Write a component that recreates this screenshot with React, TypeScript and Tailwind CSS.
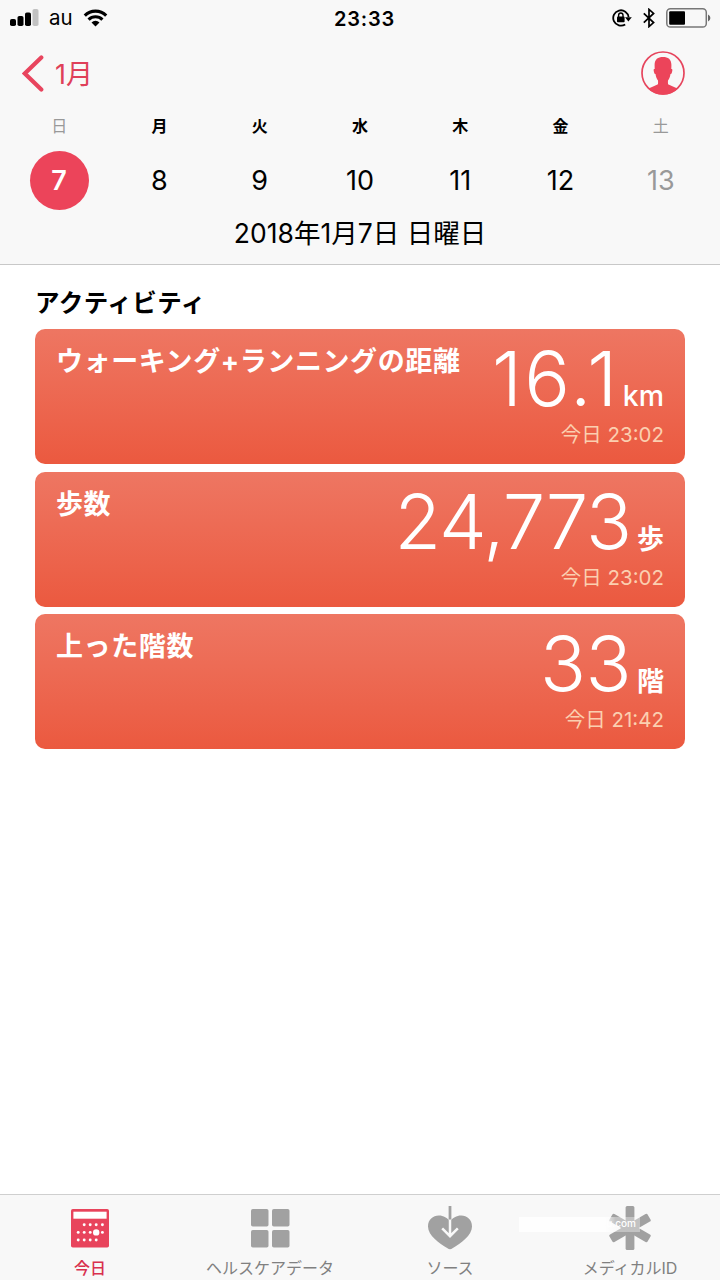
import type { ReactNode } from 'react';

const days = [
  { label: '日', date: 7, weekend: true, selected: true },
  { label: '月', date: 8 },
  { label: '火', date: 9 },
  { label: '水', date: 10 },
  { label: '木', date: 11 },
  { label: '金', date: 12 },
  { label: '土', date: 13, weekend: true },
];

const activities = [
  {
    title: 'ウォーキング+ランニングの距離',
    value: '16.1',
    unit: 'km',
    time: '今日 23:02',
    valueClass: 'tracking-[2.5px]',
    unitClass: 'ml-[3px] text-[28.5px] font-medium',
  },
  {
    title: '歩数',
    value: '24,773',
    unit: '歩',
    time: '今日 23:02',
    valueClass: 'tracking-[-1px]',
    unitClass: 'ml-[6px] text-[27px] font-bold',
  },
  {
    title: '上った階数',
    value: '33',
    unit: '階',
    time: '今日 21:42',
    valueClass: 'tracking-[-0.5px]',
    unitClass: 'ml-[6px] text-[27px] font-bold',
  },
];

function StatusBar() {
  return (
    <div className="flex h-9 items-center justify-between pl-[10px] pr-[9px]">
      <div className="flex w-[204px] items-center">
        <svg width="29" height="18" viewBox="0 0 29 18">
          <rect x="0" y="10" width="6" height="7" rx="1.8" />
          <rect x="7.5" y="7" width="6" height="10" rx="1.8" />
          <rect x="15" y="3.5" width="6" height="13.5" rx="1.8" />
          <rect x="22.5" y="0" width="6" height="17" rx="1.8" fill="#c2c2c2" />
        </svg>
        <span className="ml-[10px] pt-px text-[20.5px] leading-none">au</span>
        <svg className="ml-[10px]" width="25" height="18" viewBox="0 0 26 19" fill="none" stroke="#000" strokeWidth="3.3">
          <path d="M1.7 6.9a16 16 0 0 1 22.6 0" />
          <path d="M5.7 11.2a10.4 10.4 0 0 1 14.6 0" />
          <path d="M13 18.4l-4.2-4.2a6 6 0 0 1 8.4 0z" fill="#000" stroke="none" />
        </svg>
      </div>
      <span className="pt-px text-[20px] font-semibold leading-none tracking-[0.8px]">23:33</span>
      <div className="flex w-[196px] items-center justify-end">
        <svg width="20" height="18" viewBox="0 0 20 18" fill="none" stroke="#000" strokeWidth="1.8">
          <path d="M13.2 15.4A7.7 7.7 0 1 1 16.6 8.2" />
          <path d="M13 8.2h6.8l-3.4 4.2z" fill="#000" stroke="none" />
          <rect x="5" y="7.6" width="7.6" height="5.6" rx="0.8" fill="#000" stroke="none" />
          <path d="M6.6 8V6.2a2.2 2.2 0 0 1 4.400 0V8" strokeWidth="1.4" />
        </svg>
        <svg className="ml-[11px]" width="12" height="20" viewBox="0 0 12 20" fill="none" stroke="#000" strokeWidth="1.7">
          <path d="M0.8 5.4l9.800 9.200L6 18.600V1.400l4.600 4L0.800 14.600" />
        </svg>
        <svg className="ml-[11px]" width="45" height="20" viewBox="0 0 45 20">
          <rect x="0.8" y="0.8" width="39.5" height="18.2" rx="3.6" fill="none" stroke="#777" strokeWidth="1.5" />
          <rect x="3.2" y="3.3" width="15.8" height="13.4" rx="1" />
          <path d="M42 6.5q2.400 1 2.400 3.500T42 13.500z" fill="#666" />
        </svg>
      </div>
    </div>
  );
}

function ProfileIcon() {
  return (
    <svg width="44" height="44" viewBox="0 0 44 44">
      <circle cx="22" cy="22" r="21" fill="none" stroke="#e6455d" strokeWidth="1.7" />
      <path
        fill="#ec445a"
        d="M22 6c5.200 0 8.600 2.400 8.400 8.600l-.1 3.400c1.300-.2 1.200 1.200.8 2.700-.4 1.400-.7 2.400-1.600 2.400-.4 2.900-1.300 5-2.500 6.500-.2 2.600 0 4.500.8 5.400 1.300 1.300 4.800 1.800 8.600 3A21 21 0 0 1 7.600 38c3.800-1.200 7.300-1.700 8.600-3 .8-.9 1-2.800.8-5.400-1.200-1.500-2.100-3.600-2.500-6.500-.9 0-1.200-1-1.600-2.400-.4-1.500-.5-2.900.8-2.700l-.1-3.400C13.400 8.400 16.800 6 22 6z"
      />
      <path fill="#ec445a" d="M7.600 37.500A21 21 0 0 0 36.400 37.500L27.500 33.500h-11z" />
    </svg>
  );
}

function CalendarIcon() {
  const dots = [
    [13.2, 15.8], [19.2, 15.8], [25.2, 15.8], [31.4, 15.8],
    [7.2, 23.4], [13.2, 23.4], [19.2, 23.4], [31.4, 23.4],
    [7.2, 31], [13.2, 31], [19.2, 31], [25.2, 31],
  ];
  return (
    <svg width="38" height="39" viewBox="0 0 38 39" fill="#fff">
      <rect width="38" height="38.5" rx="1.8" fill="#e8445c" />
      <rect x="2.4" y="2.7" width="33.2" height="7" />
      {dots.map(([x, y]) => (
        <circle key={`${x}-${y}`} cx={x} cy={y} r="1.45" />
      ))}
      <circle cx="25.2" cy="23.4" r="3.2" />
    </svg>
  );
}

function GridIcon() {
  return (
    <svg width="39" height="39" viewBox="0 0 39 39" fill="#a1a1a1">
      <rect width="17.5" height="17.5" rx="1.8" />
      <rect x="21" width="17.5" height="17.5" rx="1.8" />
      <rect y="21" width="17.5" height="17.5" rx="1.8" />
      <rect x="21" y="21" width="17.5" height="17.5" rx="1.8" />
    </svg>
  );
}

function HeartIcon() {
  return (
    <svg width="44" height="44" viewBox="0 0 44 44" fill="none">
      <path
        fill="#a1a1a1"
        d="M22 43.200c-1 0-1.600-.3-2.500-.9C11 37 0 29.500 0 20.500 0 13.700 5 9.600 10.800 9.600c4.700 0 8.700 2.400 11.200 6 2.500-3.600 6.500-6 11.200-6C39 9.600 44 13.700 44 20.500c0 9-11 16.500-19.500 21.800-.9.600-1.500.9-2.500.9z"
      />
      <path d="M22 0v14" stroke="#a1a1a1" strokeWidth="2.8" />
      <path d="M22 13.500V30M14.200 22.300l7.800 7.900 7.800-7.900" stroke="#f8f8f8" strokeWidth="2.5" />
    </svg>
  );
}

function MedicalIcon() {
  return (
    <svg width="42" height="44" viewBox="0 0 42 44" fill="#a1a1a1">
      <rect x="16.6" y="0" width="8.8" height="44" rx="1.5" />
      <rect x="16.6" y="0" width="8.8" height="44" rx="1.5" transform="rotate(60 21 22)" />
      <rect x="16.6" y="0" width="8.8" height="44" rx="1.5" transform="rotate(-60 21 22)" />
    </svg>
  );
}

function Tab({ label, active, children }: { label: string; active?: boolean; children: ReactNode }) {
  return (
    <div className="flex flex-1 flex-col items-center pt-[9px]">
      <div className="flex h-[48px] items-center">{children}</div>
      <span
        className={`mt-[5px] whitespace-nowrap text-[16px] leading-[23px] ${active ? 'font-medium text-[#d9304f]' : 'text-[#808080]'}`}
      >
        {label}
      </span>
    </div>
  );
}

export default function App() {
  return (
    <div
      lang="ja"
      className="relative flex h-[1280px] w-[720px] flex-col overflow-hidden bg-white font-['Inter','Noto_Sans_CJK_JP',sans-serif] text-black"
    >
      <header className="h-[265px] border-b border-[#c8c8c8] bg-[#f8f8f8]">
        <StatusBar />
        <div className="flex h-[74px] items-center justify-between pl-[22px] pr-[35px]">
          <div className="flex items-center text-[#df4059]">
            <svg width="22" height="37" viewBox="0 0 22 37" fill="none" stroke="#e8455e" strokeWidth="4.2" strokeLinecap="round">
              <path d="M19.3 2.5L2.8 18.5l16.5 16" />
            </svg>
            <span className="ml-[11px] pt-0.5 text-[27px] leading-none">1月</span>
          </div>
          <ProfileIcon />
        </div>
        <div className="grid grid-cols-7 px-[9px]">
          {days.map((day) => (
            <div key={day.date} className="flex flex-col items-center">
              <span className={`h-[30px] text-[16px] leading-[32px] ${day.weekend ? 'text-[#999]' : 'font-bold'}`}>
                {day.label}
              </span>
              <span
                className={`mt-[11px] flex h-[59px] w-[59px] items-center justify-center rounded-full pb-px text-[27px] leading-none ${
                  day.selected ? 'bg-[#ec445a] font-semibold text-white' : day.weekend ? 'text-[#999]' : ''
                }`}
              >
                {day.date}
              </span>
            </div>
          ))}
        </div>
        <p className="mt-[6px] whitespace-nowrap text-center text-[26.5px] leading-[34px]">2018年1月7日 日曜日</p>
      </header>

      <main className="flex-1 px-[35px] pt-[21px]">
        <h2 className="h-[43px] text-[24.5px] font-bold leading-[34px] tracking-[0.5px]">アクティビティ</h2>
        <div className="flex flex-col gap-[7.5px]">
          {activities.map((item) => (
            <section
              key={item.title}
              className="flex h-[135px] justify-between rounded-[10px] bg-linear-to-b from-[#ee7662] to-[#eb593f] pl-[21px] pr-[21px] text-white"
            >
              <h3 className="whitespace-nowrap pt-[13px] text-[27px] font-bold leading-[40px] tracking-[0.6px]">{item.title}</h3>
              <div className="flex flex-col items-end whitespace-nowrap">
                <div className="flex h-[92px] items-baseline pt-[14px]">
                  <span className={`text-[76px] font-light leading-[70px] ${item.valueClass}`}>{item.value}</span>
                  <span className={`leading-none ${item.unitClass}`}>{item.unit}</span>
                </div>
                <span className="text-[20.5px] leading-[27px] text-[#fbcfb0]">{item.time}</span>
              </div>
            </section>
          ))}
        </div>
      </main>

      <footer className="flex h-[86px] border-t border-[#cfcfcf] bg-[#f8f8f8]">
        <Tab label="今日" active>
          <CalendarIcon />
        </Tab>
        <Tab label="ヘルスケアデータ">
          <GridIcon />
        </Tab>
        <Tab label="ソース">
          <HeartIcon />
        </Tab>
        <Tab label="メディカルID">
          <MedicalIcon />
        </Tab>
      </footer>

      {/* translucent label lying over the tab bar */}
      <div className="absolute left-[519px] top-[1217px] h-[15px] w-[121px] bg-linear-to-r from-white/90 from-70% to-white/35 to-80% pr-[4px] text-right text-[10px] font-medium leading-[12px] text-white">
        u.com
      </div>
    </div>
  );
}
